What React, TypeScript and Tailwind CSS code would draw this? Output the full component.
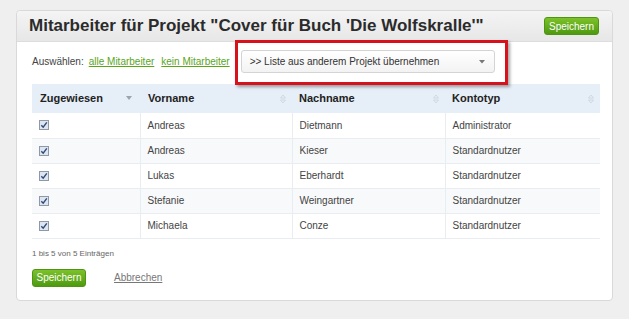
const rows = [
  { vorname: 'Andreas', nachname: 'Dietmann', typ: 'Administrator' },
  { vorname: 'Andreas', nachname: 'Kieser', typ: 'Standardnutzer' },
  { vorname: 'Lukas', nachname: 'Eberhardt', typ: 'Standardnutzer' },
  { vorname: 'Stefanie', nachname: 'Weingartner', typ: 'Standardnutzer' },
  { vorname: 'Michaela', nachname: 'Conze', typ: 'Standardnutzer' },
];

function SortBoth() {
  return (
    <svg width="6" height="10" viewBox="0 0 6 10" className="shrink-0">
      <path d="M3 1 L5.5 4 H0.5 Z" fill="none" stroke="#c9d3de" strokeWidth="0.8" />
      <path d="M3 9 L5.5 6 H0.5 Z" fill="none" stroke="#c9d3de" strokeWidth="0.8" />
    </svg>
  );
}

function SortDown() {
  return (
    <svg width="6" height="5" viewBox="0 0 6 5" className="shrink-0">
      <path d="M0 0 H6 L3 4 Z" fill="#9aa4ae" />
    </svg>
  );
}

function Check() {
  return (
    <svg width="10" height="10" viewBox="0 0 10 10">
      <rect x="0.5" y="0.5" width="9" height="9" fill="#dfe5f0" stroke="#8e99a8" />
      <path d="M2.3 5.2 L4.2 7.2 L7.8 2.3" fill="none" stroke="#2c4a7a" strokeWidth="1.4" />
    </svg>
  );
}

function GreenButton({ className = '' }: { className?: string }) {
  return (
    <button
      className={`rounded-[3px] border border-[#4f9412] bg-gradient-to-b from-[#7cc229] to-[#4f9a10] text-[10px] text-white ${className}`}
    >
      Speichern
    </button>
  );
}

export default function App() {
  return (
    <div
      className="h-[319px] w-[629px] bg-[#efefef] pl-[16px] pt-[10px]"
      style={{ fontFamily: '"Liberation Sans", Arial, sans-serif' }}
    >
      <div className="h-[291px] w-[597px] rounded-[4px] border border-[#d9d9d9] bg-white">
        <div className="flex h-[31px] items-center justify-between rounded-t-[4px] border-b border-[#dddddd] bg-gradient-to-b from-[#f4f4f4] to-[#e7e7e7] pl-[12px] pr-[13px]">
          <h1 className="text-[17px] font-bold text-[#2b2b2b]">
            Mitarbeiter für Projekt "Cover für Buch 'Die Wolfskralle'"
          </h1>
          <GreenButton className="h-[18px] w-[55px]" />
        </div>

        <div className="px-[15px]">
          <div className="mt-[8px] flex items-center text-[10px]">
            <span className="text-[#444]">Auswählen:</span>
            <a className="ml-[5px] text-[#5aa51a] underline">alle Mitarbeiter</a>
            <a className="ml-[7px] text-[#5aa51a] underline">kein Mitarbeiter</a>
            <div className="relative ml-[11px]">
              <div className="flex h-[23px] w-[254px] items-center justify-between rounded-[3px] border border-[#d4d4d4] bg-gradient-to-b from-white to-[#f3f3f3] pl-[8px] pr-[9px] text-[10px] text-[#333]">
                <span>&gt;&gt; Liste aus anderem Projekt übernehmen</span>
                <svg width="6" height="4" viewBox="0 0 6 4">
                  <path d="M0 0 H6 L3 3.5 Z" fill="#777" />
                </svg>
              </div>
              <div className="absolute -bottom-[12px] -left-[6px] -right-[13px] -top-[10px] border-[3px] border-[#d6121c] shadow-[2px_2px_3px_rgba(0,0,0,0.35)]" />
            </div>
          </div>

          <table className="mt-[11px] w-[568px] border-collapse text-[10px] text-[#444]">
            <thead>
              <tr className="h-[29px] bg-[#e6eef7] text-[11px] font-bold text-[#222]">
                <th className="w-[108px] pl-[8px] pr-[8px] text-left">
                  <div className="flex items-center justify-between">
                    Zugewiesen <SortDown />
                  </div>
                </th>
                <th className="w-[152px] pl-[8px] pr-[6px] text-left">
                  <div className="flex items-center justify-between">
                    Vorname <SortBoth />
                  </div>
                </th>
                <th className="w-[153px] pl-[7px] pr-[6px] text-left">
                  <div className="flex items-center justify-between">
                    Nachname <SortBoth />
                  </div>
                </th>
                <th className="pl-[7px] pr-[6px] text-left">
                  <div className="flex items-center justify-between">
                    Kontotyp <SortBoth />
                  </div>
                </th>
              </tr>
            </thead>
            <tbody>
              {rows.map((r, i) => (
                <tr key={i} className={`h-[25px] ${i % 2 === 1 ? 'bg-[#f8f9fa]' : 'bg-white'}`}>
                  <td className="border-b border-r border-[#e9edf1] pl-[7px]">
                    <Check />
                  </td>
                  <td className="border-b border-r border-[#e9edf1] pl-[7px]">{r.vorname}</td>
                  <td className="border-b border-r border-[#e9edf1] pl-[7px]">{r.nachname}</td>
                  <td className="border-b border-[#e9edf1] pl-[7px]">{r.typ}</td>
                </tr>
              ))}
            </tbody>
          </table>

          <p className="mt-[9px] text-[8px] text-[#666]">1 bis 5 von 5 Einträgen</p>

          <div className="mt-[9px] flex items-center">
            <GreenButton className="h-[18px] w-[54px]" />
            <a className="ml-[28px] text-[10px] text-[#777] underline">Abbrechen</a>
          </div>
        </div>
      </div>
    </div>
  );
}
